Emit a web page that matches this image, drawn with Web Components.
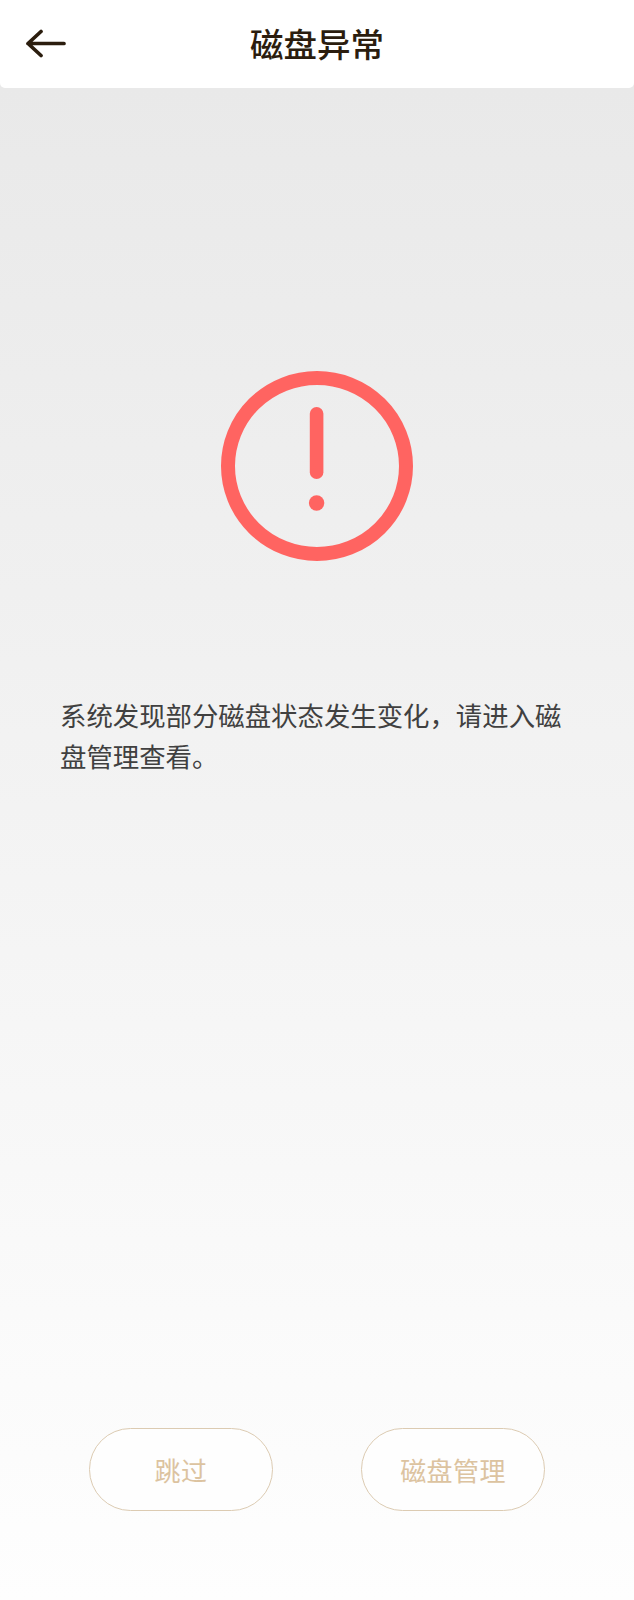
<!DOCTYPE html>
<html lang="zh-CN">
<head>
<meta charset="utf-8">
<title>磁盘异常</title>
<style>
html,body{margin:0;padding:0;background:#e9e9e9}
body{font-family:"Noto Sans CJK SC","Noto Sans",sans-serif}
</style>
</head>
<body>
<disk-alert-page>
  <app-header slot="header" title="磁盘异常"></app-header>
  <alert-icon slot="icon"></alert-icon>
  <span slot="message">系统发现部分磁盘状态发生变化，请进入磁盘管理查看。</span>
  <pill-button slot="actions">跳过</pill-button>
  <pill-button slot="actions">磁盘管理</pill-button>
</disk-alert-page>
<script>
class DiskAlertPage extends HTMLElement{
  constructor(){super();this.attachShadow({mode:'open'}).innerHTML=`
  <style>
  :host{display:flex;flex-direction:column;width:634px;height:1600px;background:linear-gradient(180deg,#e9e9e9 0,#e9e9e9 88px,#fefefe 1600px);overflow:hidden}
  .icon{display:flex;justify-content:center;padding:283px 0 0 0}
  .msg{margin:0;padding:133px 60px 0 60px;font-size:26.4px;line-height:41px;color:#404040}
  .actions{margin-top:auto;padding:0 89px 89px 89px;display:flex;justify-content:space-between}
  </style>
  <slot name="header"></slot>
  <div class="icon"><slot name="icon"></slot></div>
  <p class="msg"><slot name="message"></slot></p>
  <div class="actions"><slot name="actions"></slot></div>`;}
}
class AppHeader extends HTMLElement{
  constructor(){super();this.attachShadow({mode:'open'}).innerHTML=`
  <style>
  :host{display:grid;grid-template-columns:1fr auto 1fr;align-items:center;height:88px;padding:0 25px;background:#fff;border-radius:0 0 5px 5px;color:#2b1d0e}
  svg{display:block}
  h1{margin:0 0 2px;font-size:33.5px;font-weight:500;line-height:86px}
  </style>
  <svg width="42" height="30" viewBox="0 0 42 30" aria-hidden="true"><path d="M3 14.5H39M16 2.5 3 14.5 16 26.5" fill="none" stroke="currentColor" stroke-width="3.7" stroke-linecap="round" stroke-linejoin="round"/></svg>
  <h1></h1><span></span>`;
  this.shadowRoot.querySelector('h1').textContent=this.getAttribute('title');}
}
class AlertIcon extends HTMLElement{
  constructor(){super();this.attachShadow({mode:'open'}).innerHTML=`
  <style>:host{display:block;width:192px;height:190px}svg{display:block}</style>
  <svg width="192" height="190" viewBox="0 0 192 190" aria-hidden="true">
  <ellipse cx="96" cy="95" rx="89" ry="88" fill="none" stroke="#ff6461" stroke-width="14"/>
  <rect x="88.8" y="36" width="13.6" height="72" rx="6.8" fill="#ff6461"/>
  <circle cx="95.6" cy="132" r="7.7" fill="#ff6461"/></svg>`;}
}
class PillButton extends HTMLElement{
  constructor(){super();this.attachShadow({mode:'open'}).innerHTML=`
  <style>
  :host{display:flex;align-items:center;justify-content:center;box-sizing:border-box;width:184px;height:83px;border:1px solid #dccbb2;border-radius:42px;background:#fefefe;color:#dcc3a0;font-size:26px;letter-spacing:.4px}
  </style><slot></slot>`;}
}
customElements.define('disk-alert-page',DiskAlertPage);
customElements.define('app-header',AppHeader);
customElements.define('alert-icon',AlertIcon);
customElements.define('pill-button',PillButton);
</script>
</body>
</html>
